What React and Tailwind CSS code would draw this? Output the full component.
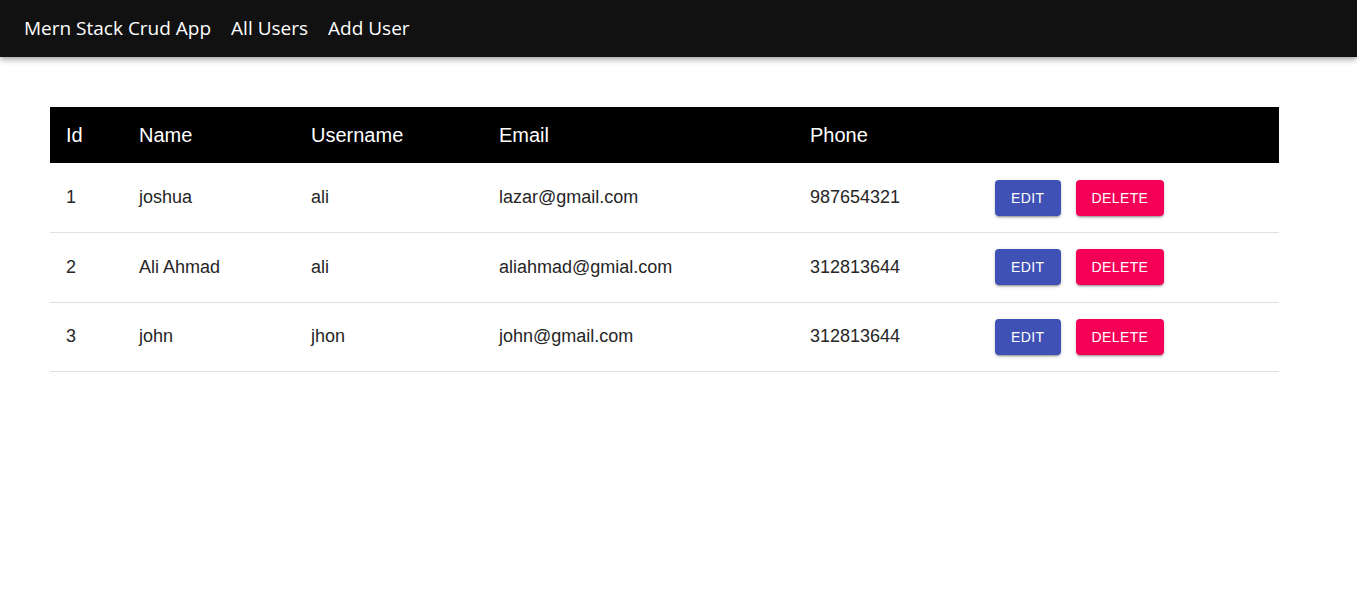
import React from "react";

const users = [
  { id: 1, name: "joshua", username: "ali", email: "lazar@gmail.com", phone: "987654321" },
  { id: 2, name: "Ali Ahmad", username: "ali", email: "aliahmad@gmial.com", phone: "312813644" },
  { id: 3, name: "john", username: "jhon", email: "john@gmail.com", phone: "312813644" },
];

const NavBar = () => (
  <header className="h-[57px] bg-[#111111] flex items-center px-6 gap-5 shadow-[0_2px_4px_-1px_rgba(0,0,0,0.2),0_4px_5px_0_rgba(0,0,0,0.14),0_1px_10px_0_rgba(0,0,0,0.12)] font-['Open_Sans',sans-serif] text-[19px] text-white">
    <span>Mern Stack Crud App</span>
    <span>All Users</span>
    <span>Add User</span>
  </header>
);

const AllUsers = () => {
  return (
    <div className="px-[50px] pt-[50px] pr-[78px]">
      <table className="w-full border-collapse font-['Liberation_Sans',Arial,sans-serif]">
        <thead>
          <tr className="bg-black text-white text-[20px] h-[56px] text-left">
            <th className="font-normal pl-4 w-[73px]">Id</th>
            <th className="font-normal pl-4 w-[172px]">Name</th>
            <th className="font-normal pl-4 w-[188px]">Username</th>
            <th className="font-normal pl-4 w-[311px]">Email</th>
            <th className="font-normal pl-4 w-[185px]">Phone</th>
            <th className="font-normal pl-4"></th>
          </tr>
        </thead>
        <tbody>
          {users.map((user) => (
            <tr key={user.id} className="h-[69.5px] border-b border-[#e0e0e0] text-[18px] text-[#262626]">
              <td className="pl-4">{user.id}</td>
              <td className="pl-4">{user.name}</td>
              <td className="pl-4">{user.username}</td>
              <td className="pl-4">{user.email}</td>
              <td className="pl-4">{user.phone}</td>
              <td className="pl-4">
                <div className="flex items-center gap-[15px]">
                  <button className="h-9 px-4 rounded bg-[#3f51b5] text-white text-sm uppercase tracking-[0.4px] shadow-[0_3px_1px_-2px_rgba(0,0,0,0.2),0_2px_2px_0_rgba(0,0,0,0.14),0_1px_5px_0_rgba(0,0,0,0.12)]">
                    Edit
                  </button>
                  <button className="h-9 px-4 rounded bg-[#f50057] text-white text-sm uppercase tracking-[0.4px] shadow-[0_3px_1px_-2px_rgba(0,0,0,0.2),0_2px_2px_0_rgba(0,0,0,0.14),0_1px_5px_0_rgba(0,0,0,0.12)]">
                    Delete
                  </button>
                </div>
              </td>
            </tr>
          ))}
        </tbody>
      </table>
    </div>
  );
};

const App = () => (
  <div className="min-h-screen bg-white">
    <NavBar />
    <AllUsers />
  </div>
);

export default App;
